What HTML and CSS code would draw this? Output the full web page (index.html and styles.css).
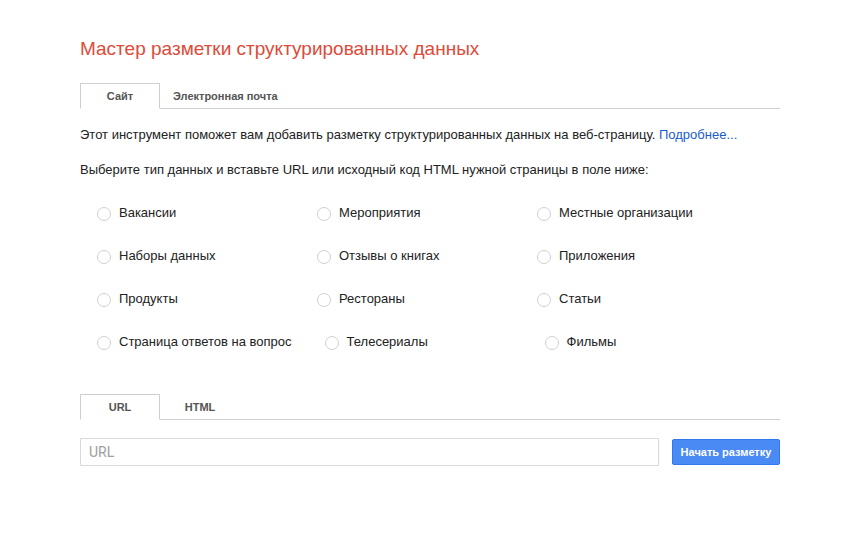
FILE: index.html
```html
<!DOCTYPE html>
<html lang="ru">
<head>
<meta charset="utf-8">
<title>Мастер разметки структурированных данных</title>
<link rel="stylesheet" href="styles.css">
</head>
<body>
<div class="page">
  <h1 class="title">Мастер разметки структурированных данных</h1>

  <div class="tabs tabs-top">
    <div class="tab active">Сайт</div>
    <div class="tab">Электронная почта</div>
  </div>

  <p class="intro">Этот инструмент поможет вам добавить разметку структурированных данных на веб-страницу. <a class="link" href="#">Подробнее...</a></p>
  <p class="choose">Выберите тип данных и вставьте URL или исходный код HTML нужной страницы в поле ниже:</p>

  <div class="options">
    <div class="row">
      <label class="opt"><span class="radio"></span><span>Вакансии</span></label>
      <label class="opt"><span class="radio"></span><span>Мероприятия</span></label>
      <label class="opt"><span class="radio"></span><span>Местные организации</span></label>
    </div>
    <div class="row">
      <label class="opt"><span class="radio"></span><span>Наборы данных</span></label>
      <label class="opt"><span class="radio"></span><span>Отзывы о книгах</span></label>
      <label class="opt"><span class="radio"></span><span>Приложения</span></label>
    </div>
    <div class="row">
      <label class="opt"><span class="radio"></span><span>Продукты</span></label>
      <label class="opt"><span class="radio"></span><span>Рестораны</span></label>
      <label class="opt"><span class="radio"></span><span>Статьи</span></label>
    </div>
    <div class="row">
      <label class="opt"><span class="radio"></span><span>Страница ответов на вопрос</span></label>
      <label class="opt"><span class="radio"></span><span>Телесериалы</span></label>
      <label class="opt"><span class="radio"></span><span>Фильмы</span></label>
    </div>
  </div>

  <div class="tabs tabs-bottom">
    <div class="tab active">URL</div>
    <div class="tab">HTML</div>
  </div>

  <div class="url-row">
    <input class="url-input" type="text" placeholder="URL">
    <button class="start-btn" type="button">Начать разметку</button>
  </div>
</div>
</body>
</html>
```

FILE: styles.css
```css
html, body {
  margin: 0;
  padding: 0;
  background: #fff;
}

body {
  font-family: Arial, "Liberation Sans", sans-serif;
  font-size: 13px;
  color: #222;
}

.page {
  width: 700px;
  padding-left: 80px;
}

.title {
  margin: 37px 0 0;
  font-size: 19px;
  line-height: 24px;
  font-weight: normal;
  color: #dd4b39;
}

.tabs {
  display: flex;
  border-bottom: 1px solid #cfcfcf;
}

.tabs-top {
  margin-top: 22px;
}

.tabs-bottom {
  margin-top: 31px;
}

.tab {
  box-sizing: border-box;
  min-width: 80px;
  height: 26px;
  margin-bottom: -1px;
  padding: 0 12px;
  border: 1px solid transparent;
  font-size: 11px;
  font-weight: bold;
  line-height: 24px;
  text-align: center;
  color: #555;
}

.tab.active {
  border-color: #cfcfcf;
  border-bottom-color: #fff;
  background: #fff;
}

.intro {
  margin: 17px 0 0;
  line-height: 18px;
}

.choose {
  margin: 17px 0 0;
  line-height: 18px;
}

.link {
  color: #1a5ccc;
  text-decoration: none;
}

.options {
  display: flex;
  flex-direction: column;
  margin-top: 12px;
  padding-left: 17px;
}

.row {
  display: flex;
  align-items: center;
  height: 43px;
}

.opt {
  box-sizing: border-box;
  display: flex;
  align-items: center;
  min-width: 220px;
  padding-right: 33px;
  line-height: 18px;
  white-space: nowrap;
}

.radio {
  box-sizing: border-box;
  width: 14px;
  height: 14px;
  margin-right: 8px;
  margin-top: 3px;
  border: 1px solid #d0d0d0;
  border-radius: 50%;
  background: #fff;
  flex: none;
}

.url-row {
  display: flex;
  align-items: center;
  margin-top: 18px;
  width: 700px;
}

.url-input {
  box-sizing: border-box;
  width: 579px;
  height: 28px;
  margin: 0;
  padding: 0 8px;
  border: 1px solid #d9d9d9;
  border-radius: 1px;
  font-family: Roboto, Arial, "Liberation Sans", sans-serif;
  font-size: 14px;
  color: #222;
  outline: none;
}

.url-input::placeholder {
  color: #9e9e9e;
}

.start-btn {
  box-sizing: border-box;
  height: 26px;
  width: 108px;
  margin: 0 0 0 13px;
  padding: 0;
  border: 1px solid #3079ed;
  border-radius: 2px;
  background: #4a8af4;
  font-family: Arial, "Liberation Sans", sans-serif;
  font-size: 11px;
  font-weight: bold;
  color: #fff;
}
```
